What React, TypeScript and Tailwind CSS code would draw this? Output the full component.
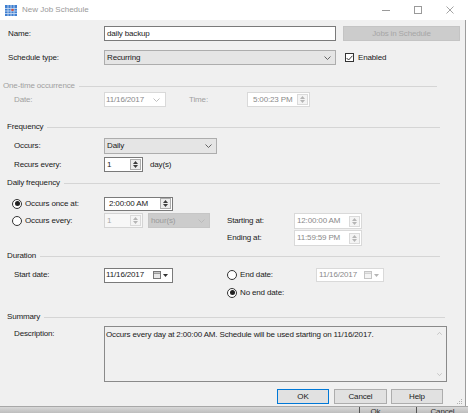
import React from 'react';

// New Job Schedule dialog (SSMS style), drawn at screenshot scale.

const Chev = ({ dim }: { dim?: boolean }) => (
  <svg width="7" height="4" viewBox="0 0 7 4" className="shrink-0">
    <path d="M0.5 0.5 L3.5 3.5 L6.5 0.5" fill="none" stroke={dim ? '#b8b8b8' : '#555'} strokeWidth="0.9" />
  </svg>
);

const SpinBtn = ({ dim }: { dim?: boolean }) => (
  <div className={`w-[11px] h-[11px] mr-[1px] border ${dim ? 'border-[#dadada] bg-[#f4f4f4]' : 'border-[#adadad] bg-[#ececec]'} flex flex-col items-center justify-center gap-[1px] shrink-0`}>
    <svg width="5" height="3" viewBox="0 0 5 3"><path d="M0 3 L2.5 0 L5 3Z" fill={dim ? '#b5b5b5' : '#3c3c3c'} /></svg>
    <svg width="5" height="3" viewBox="0 0 5 3"><path d="M0 0 L5 0 L2.5 3Z" fill={dim ? '#b5b5b5' : '#3c3c3c'} /></svg>
  </div>
);

const Radio = ({ on }: { on?: boolean }) => (
  <span className="w-[10px] h-[10px] rounded-full border border-[#333] bg-white flex items-center justify-center shrink-0">
    {on && <span className="w-[5px] h-[5px] rounded-full bg-[#222]" />}
  </span>
);

const CalIcon = ({ dim }: { dim?: boolean }) => (
  <span className="flex items-center gap-[2px] shrink-0">
    <svg width="8" height="8" viewBox="0 0 8 8">
      <rect x="0.5" y="0.5" width="7" height="7" fill={dim ? '#f4f4f4' : '#e8e8e8'} stroke={dim ? '#c4c4c4' : '#777'} />
      <line x1="0.5" y1="2.2" x2="7.5" y2="2.2" stroke={dim ? '#c4c4c4' : '#777'} />
    </svg>
    <svg width="5" height="3" viewBox="0 0 5 3"><path d="M0 0 L5 0 L2.5 3Z" fill={dim ? '#b5b5b5' : '#333'} /></svg>
  </span>
);

const Group = ({ label, dim, pl, pr, className }: { label: string; dim?: boolean; pl: string; pr: string; className: string }) => (
  <div className={`flex items-center h-[12px] ${pl} ${pr} ${className}`}>
    <span className={dim ? 'text-[#a0a0a0]' : ''}>{label}</span>
    <div className="flex-1 h-px bg-[#d5d5d5] ml-[4px]" />
  </div>
);

export default function App() {
  return (
    <div className="w-[468px] h-[413px] overflow-hidden bg-white flex flex-col font-['Liberation_Sans',Arial,sans-serif] text-[8px] tracking-[-0.15px] leading-none text-[#1a1a1a]">
      {/* Title bar */}
      <div className="w-[466px] h-[20px] bg-white flex items-center shrink-0">
        <svg width="12" height="11" viewBox="0 0 12 11" className="ml-[5px]">
          <rect x="0" y="0" width="12" height="11" fill="#3f7fd0" />
          <path d="M0 3.5 H12 M0 6 H12 M0 8.5 H12 M3 0 V11 M6 0 V11 M9 0 V11" stroke="#cfe0f5" strokeWidth="0.8" />
          <rect x="6.4" y="3.9" width="2.2" height="2" fill="#e0492f" />
        </svg>
        <span className="ml-[5px] text-[#999] tracking-normal">New Job Schedule</span>
        <div className="ml-auto flex h-full">
          <div className="w-[32px] flex items-center justify-center">
            <div className="w-[8px] h-px bg-[#9a9a9a]" />
          </div>
          <div className="w-[32px] flex items-center justify-center">
            <div className="w-[8px] h-[8px] border border-[#9a9a9a]" />
          </div>
          <div className="w-[32px] flex items-center justify-center">
            <svg width="8" height="8" viewBox="0 0 8 8"><path d="M0.5 0.5 L7.5 7.5 M7.5 0.5 L0.5 7.5" stroke="#9a9a9a" strokeWidth="0.9" /></svg>
          </div>
        </div>
      </div>

      {/* Body */}
      <div className="relative w-[466px] flex-1 bg-[#f0f0f0] border-r border-[#9c9c9c] flex flex-col">
        {/* Name */}
        <div className="flex items-center h-[15px] mt-[6px]">
          <span className="pl-[8px] w-[104px]">Name:</span>
          <div className="w-[232px] h-[15px] bg-white border border-[#7a7a7a] flex items-center pl-[2px]">daily backup</div>
          <div className="ml-[7px] w-[117px] h-[15px] bg-[#cccccc] border border-[#c4c4c4] flex items-center justify-center text-[#a6a6a6]">Jobs in Schedule</div>
        </div>

        {/* Schedule type */}
        <div className="flex items-center h-[15px] mt-[9px]">
          <span className="pl-[8px] w-[104px]">Schedule type:</span>
          <div className="w-[232px] h-[15px] bg-[#e5e5e5] border border-[#adadad] flex items-center pl-[2px] pr-[4px]">
            <span className="flex-1">Recurring</span>
            <Chev />
          </div>
          <span className="ml-[9px] w-[9px] h-[9px] border border-[#333] bg-white flex items-center justify-center">
            <svg width="7" height="6" viewBox="0 0 7 6"><path d="M0.6 3 L2.6 5 L6.4 0.8" fill="none" stroke="#222" strokeWidth="0.9" /></svg>
          </span>
          <span className="ml-[4px]">Enabled</span>
        </div>

        {/* One-time occurrence */}
        <Group label="One-time occurrence" dim pl="pl-[3px]" pr="pr-[28px]" className="mt-[15px]" />
        <div className="flex items-center h-[15px]">
          <span className="pl-[14px] w-[104px] text-[#a0a0a0]">Date:</span>
          <div className="w-[62px] h-[15px] bg-white border border-[#d9d9d9] flex items-center pl-[1px] pr-[5px] text-[#8a8a8a]">
            <span className="flex-1">11/16/2017</span>
            <Chev dim />
          </div>
          <span className="ml-[23px] w-[58px] text-[#a0a0a0]">Time:</span>
          <div className="w-[63px] h-[15px] bg-white border border-[#d9d9d9] flex items-center pl-[5px] text-[#8a8a8a]">
            <span className="flex-1">5:00:23 PM</span>
            <SpinBtn dim />
          </div>
        </div>

        {/* Frequency */}
        <Group label="Frequency" pl="pl-[7px]" pr="pr-[25px]" className="mt-[14px]" />
        <div className="flex items-center h-[16px] mt-[5px]">
          <span className="pl-[14px] w-[104px]">Occurs:</span>
          <div className="w-[113px] h-[16px] bg-[#e5e5e5] border border-[#adadad] flex items-center pl-[2px] pr-[4px]">
            <span className="flex-1">Daily</span>
            <Chev />
          </div>
        </div>
        <div className="flex items-center h-[15px] mt-[3px]">
          <span className="pl-[14px] w-[104px]">Recurs every:</span>
          <div className="w-[39px] h-[15px] bg-white border border-[#7a7a7a] flex items-center pl-[2px]">
            <span className="flex-1">1</span>
            <SpinBtn />
          </div>
          <span className="ml-[7px]">day(s)</span>
        </div>

        {/* Daily frequency */}
        <Group label="Daily frequency" pl="pl-[7px]" pr="pr-[25px]" className="mt-[5px]" />
        <div className="flex items-center h-[15px] mt-[7px]">
          <span className="pl-[12px] w-[104px] flex items-center gap-[3px]"><Radio on />Occurs once at:</span>
          <div className="w-[69px] h-[14px] bg-white border border-[#7a7a7a] flex items-center pl-[4px]">
            <span className="flex-1">2:00:00 AM</span>
            <SpinBtn />
          </div>
        </div>
        <div className="flex mt-[2px]">
          <div className="w-[227px] flex items-center h-[15px]">
            <span className="pl-[12px] w-[104px] flex items-center gap-[3px]"><Radio />Occurs every:</span>
            <div className="w-[39px] h-[15px] bg-[#f7f7f7] border border-[#d4d4d4] flex items-center pl-[2px] text-[#a8a8a8]">
              <span className="flex-1">1</span>
              <SpinBtn dim />
            </div>
            <div className="ml-[5px] w-[62px] h-[15px] bg-[#cccccc] border border-[#c6c6c6] flex items-center pl-[2px] pr-[4px] text-[#9a9a9a]">
              <span className="flex-1">hour(s)</span>
              <Chev dim />
            </div>
          </div>
          <div className="flex flex-col">
            <div className="flex items-center h-[16px]">
              <span className="w-[67px]">Starting at:</span>
              <div className="w-[68px] h-[16px] bg-white border border-[#d9d9d9] flex items-center pl-[2px] text-[#8a8a8a]">
                <span className="flex-1">12:00:00 AM</span>
                <SpinBtn dim />
              </div>
            </div>
            <div className="flex items-center h-[16px] mt-[1px]">
              <span className="w-[67px]">Ending at:</span>
              <div className="w-[68px] h-[16px] bg-white border border-[#d9d9d9] flex items-center pl-[2px] text-[#8a8a8a]">
                <span className="flex-1">11:59:59 PM</span>
                <SpinBtn dim />
              </div>
            </div>
          </div>
        </div>

        {/* Duration */}
        <Group label="Duration" pl="pl-[7px]" pr="pr-[25px]" className="mt-[4px]" />
        <div className="flex mt-[5px]">
          <div className="w-[227px] flex items-center h-[16px]">
            <span className="pl-[14px] w-[104px]">Start date:</span>
            <div className="w-[69px] h-[15px] bg-white border border-[#7a7a7a] flex items-center pl-[1px] pr-[4px]">
              <span className="flex-1">11/16/2017</span>
              <CalIcon />
            </div>
          </div>
          <div className="flex flex-col">
            <div className="flex items-center h-[16px]">
              <span className="w-[89px] flex items-center gap-[3px]"><Radio />End date:</span>
              <div className="w-[68px] h-[14px] bg-white border border-[#d9d9d9] flex items-center pl-[2px] pr-[4px] text-[#8a8a8a]">
                <span className="flex-1">11/16/2017</span>
                <CalIcon dim />
              </div>
            </div>
            <div className="flex items-center h-[13px] mt-[3px]">
              <span className="flex items-center gap-[3px]"><Radio on />No end date:</span>
            </div>
          </div>
        </div>

        {/* Summary */}
        <Group label="Summary" pl="pl-[7px]" pr="pr-[20px]" className="mt-[12px]" />
        <div className="flex h-[56px] mt-[3px]">
          <span className="pl-[14px] w-[104px] pt-[4px]">Description:</span>
          <div className="w-[343px] h-[56px] border border-[#8a8a8a] bg-[#f0f0f0] flex">
            <div className="flex-1 pl-[1px] pt-[4px]">Occurs every day at 2:00:00 AM. Schedule will be used starting on 11/16/2017.</div>
            <div className="w-[13px] flex flex-col items-center justify-between py-[5px]">
              <svg width="5" height="3" viewBox="0 0 5 3"><path d="M0.3 2.7 L2.5 0.4 L4.7 2.7" fill="none" stroke="#bcbcbc" strokeWidth="0.8" /></svg>
              <svg width="5" height="3" viewBox="0 0 5 3"><path d="M0.3 0.3 L2.5 2.6 L4.7 0.3" fill="none" stroke="#bcbcbc" strokeWidth="0.8" /></svg>
            </div>
          </div>
        </div>

        {/* Buttons */}
        <div className="flex justify-end h-[15px] mt-[7px] pr-[22px]">
          <div className="w-[52px] h-[15px] bg-[#e1e1e1] border border-[#0078d7] flex items-center justify-center">OK</div>
          <div className="ml-[5px] w-[53px] h-[15px] bg-[#e1e1e1] border border-[#adadad] flex items-center justify-center">Cancel</div>
          <div className="ml-[4px] w-[52px] h-[15px] bg-[#e1e1e1] border border-[#adadad] flex items-center justify-center">Help</div>
        </div>

        {/* size grip */}
        <svg width="6" height="6" viewBox="0 0 6 6" className="absolute right-[2px] bottom-[1px]">
          <rect x="4" y="0" width="1" height="1" fill="#b0b0b0" />
          <rect x="2" y="2" width="1" height="1" fill="#b0b0b0" />
          <rect x="4" y="2" width="1" height="1" fill="#b0b0b0" />
          <rect x="0" y="4" width="1" height="1" fill="#b0b0b0" />
          <rect x="2" y="4" width="1" height="1" fill="#b0b0b0" />
          <rect x="4" y="4" width="1" height="1" fill="#b0b0b0" />
        </svg>
      </div>

      {/* window behind, peeking out under the dialog */}
      <div className="h-[7px] shrink-0 w-full bg-[linear-gradient(#d8d8d8,#bdbdbd)] border-t border-[#a8a8a8] flex overflow-hidden">
        <div className="ml-[359px] w-[32px] border-l border-[#555] flex justify-center pt-[1px] text-[#333]">Ok</div>
        <div className="ml-[25px] w-[52px] border-l border-[#555] flex justify-center pt-[1px] text-[#333]">Cancel</div>
      </div>
    </div>
  );
}
